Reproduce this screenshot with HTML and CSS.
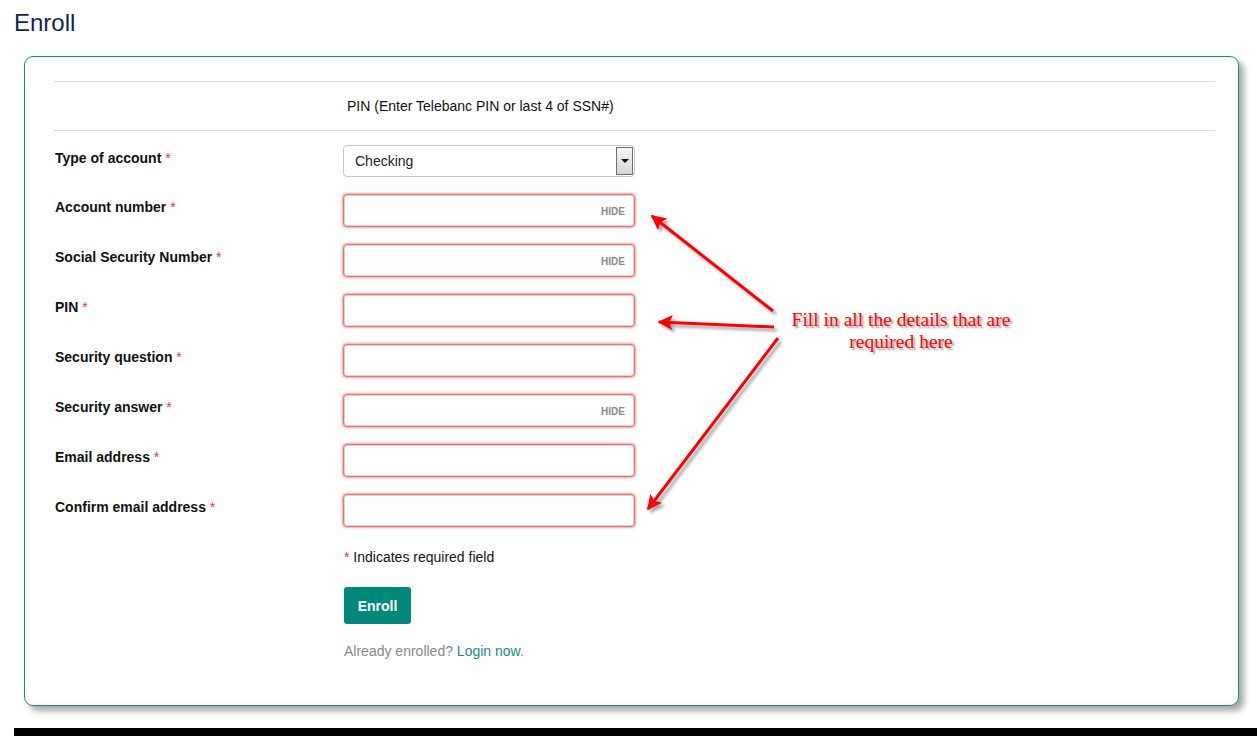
FILE: index.html
```html
<!DOCTYPE html>
<html>
<head>
<meta charset="utf-8">
<link rel="stylesheet" href="styles.css">
</head>
<body>
<div class="page">
  <h1 class="title">Enroll</h1>
  <div class="card">
    <hr class="rule">
    <div class="pin-note-row">
      <div></div>
      <div class="pin-note">PIN (Enter Telebanc PIN or last 4 of SSN#)</div>
    </div>
    <hr class="rule">
    <div class="form">
      <div class="row">
        <label class="label">Type of account <span class="req">*</span></label>
        <div class="select">
          <span class="select-text">Checking</span>
          <span class="select-btn"><span class="tri"></span></span>
        </div>
      </div>
      <div class="row">
        <label class="label">Account number <span class="req">*</span></label>
        <div class="field"><input class="field-input" type="text"><span class="hide">HIDE</span></div>
      </div>
      <div class="row">
        <label class="label">Social Security Number <span class="req">*</span></label>
        <div class="field"><input class="field-input" type="text"><span class="hide">HIDE</span></div>
      </div>
      <div class="row">
        <label class="label">PIN <span class="req">*</span></label>
        <div class="field"><input class="field-input" type="text"></div>
      </div>
      <div class="row">
        <label class="label">Security question <span class="req">*</span></label>
        <div class="field"><input class="field-input" type="text"></div>
      </div>
      <div class="row">
        <label class="label">Security answer <span class="req">*</span></label>
        <div class="field"><input class="field-input" type="text"><span class="hide">HIDE</span></div>
      </div>
      <div class="row">
        <label class="label">Email address <span class="req">*</span></label>
        <div class="field"><input class="field-input" type="text"></div>
      </div>
      <div class="row">
        <label class="label">Confirm email address <span class="req">*</span></label>
        <div class="field"><input class="field-input" type="text"></div>
      </div>
    </div>
    <div class="after">
      <p class="required-note"><span class="req">*</span> Indicates required field</p>
      <button class="btn">Enroll</button>
      <p class="already">Already enrolled? <a class="login" href="#">Login now</a>.</p>
    </div>
  </div>
  <div class="black-bar"></div>
</div>

<svg class="arrows" width="1257" height="736" viewBox="0 0 1257 736">
  <defs>
    <marker id="head" viewBox="0 0 10 10" refX="9" refY="5" markerWidth="6" markerHeight="5" orient="auto" markerUnits="strokeWidth">
      <path d="M0,0 L10,5 L0,10 L2,5 Z" fill="#ff0000"/>
    </marker>
    <filter id="shadow" x="-20%" y="-20%" width="140%" height="140%">
      <feDropShadow dx="3" dy="3" stdDeviation="1.5" flood-color="#000" flood-opacity="0.35"/>
    </filter>
  </defs>
  <g filter="url(#shadow)" stroke="#ff0000" stroke-width="3" fill="none">
    <line x1="773" y1="311" x2="652" y2="216" marker-end="url(#head)"/>
    <line x1="774" y1="327" x2="659" y2="322" marker-end="url(#head)"/>
    <line x1="778" y1="338" x2="648" y2="509" marker-end="url(#head)"/>
  </g>
</svg>
<div class="annotation">Fill in all the details that are<br>required here</div>
</body>
</html>
```

FILE: styles.css
```css
* { box-sizing: border-box; }

html, body {
  margin: 0;
  padding: 0;
  background: #ffffff;
  overflow: hidden;
}

body {
  font-family: "Liberation Sans", Arial, sans-serif;
  color: #111;
  width: 1257px;
  height: 736px;
  position: relative;
}

.page {
  display: flex;
  flex-direction: column;
}

.title {
  margin: 9px 0 0 14px;
  font-size: 24px;
  line-height: 28px;
  font-weight: normal;
  color: #102650;
}

.card {
  margin: 19px 18px 0 24px;
  border: 1px solid #1b8a81;
  border-radius: 9px;
  background: #fff;
  box-shadow: 5px 5px 6px rgba(0, 0, 0, 0.35);
  padding: 24px 23px 45px 29px;
  height: 650px;
}

.rule {
  border: 0;
  border-top: 1px solid #dddddd;
  margin: 0;
  height: 0;
}

.pin-note-row {
  display: grid;
  grid-template-columns: 289px 1fr;
  height: 48px;
  align-items: center;
}

.pin-note {
  font-size: 14px;
  padding-left: 4px;
  color: #111;
}

.form {
  display: flex;
  flex-direction: column;
  gap: 17px;
  margin-top: 14px;
}

.row {
  display: grid;
  grid-template-columns: 289px 292px;
  align-items: start;
}

.label {
  font-size: 14px;
  font-weight: bold;
  line-height: 16px;
  padding-top: 5px;
  color: #111;
  padding-left: 1px;
}

.req {
  color: #e0383e;
  font-weight: normal;
}

.select {
  height: 32px;
  border: 1px solid #c8c8c8;
  border-radius: 4px;
  display: flex;
  align-items: center;
  padding: 1px 1px 1px 11px;
  background: #fff;
}

.select-text {
  flex: 1;
  font-size: 14px;
  color: #222;
}

.select-btn {
  width: 17px;
  height: 28px;
  border: 1px solid #707070;
  background: linear-gradient(#f4f4f4, #d8d8d8);
  display: flex;
  align-items: center;
  justify-content: center;
}

.tri {
  width: 0;
  height: 0;
  border-left: 4px solid transparent;
  border-right: 4px solid transparent;
  border-top: 4px solid #111;
}

.field {
  height: 33px;
  border: 1px solid #e97474;
  border-radius: 4px;
  box-shadow: 0 0 2px 1px rgba(255, 40, 40, 0.45), inset 0 0 0 1px #d6d6d6;
  display: flex;
  align-items: center;
  padding: 0 9px 0 10px;
  background: #fff;
}

.field-input {
  flex: 1;
  min-width: 0;
  border: 0;
  outline: none;
  background: transparent;
  font-size: 14px;
  font-family: inherit;
}

.hide {
  font-size: 10px;
  font-weight: bold;
  color: #8a8a8a;
  padding-top: 2px;
}

.after {
  padding-left: 290px;
  display: flex;
  flex-direction: column;
  align-items: flex-start;
}

.required-note {
  margin: 22px 0 0 0;
  font-size: 14px;
  line-height: 16px;
  color: #111;
}

.btn {
  margin-top: 22px;
  width: 67px;
  height: 37px;
  border: 0;
  border-radius: 3px;
  background: #00897b;
  color: #fff;
  font-family: "Liberation Sans", Arial, sans-serif;
  font-weight: bold;
  font-size: 14px;
  padding: 0;
}

.already {
  margin: 19px 0 0 0;
  font-size: 14px;
  line-height: 16px;
  color: #888;
}

.login {
  color: #178a85;
  text-decoration: none;
}

.black-bar {
  margin: 22px 0 0 14px;
  height: 10px;
  background: #000;
}

.arrows {
  position: absolute;
  left: 0;
  top: 0;
  pointer-events: none;
}

.annotation {
  position: absolute;
  left: 778px;
  top: 309px;
  width: 246px;
  text-align: center;
  font-family: "Liberation Serif", "Times New Roman", serif;
  font-size: 19.5px;
  line-height: 22px;
  color: #ff0000;
  text-shadow: 2px 2px 2px rgba(0, 0, 0, 0.4);
}
```
